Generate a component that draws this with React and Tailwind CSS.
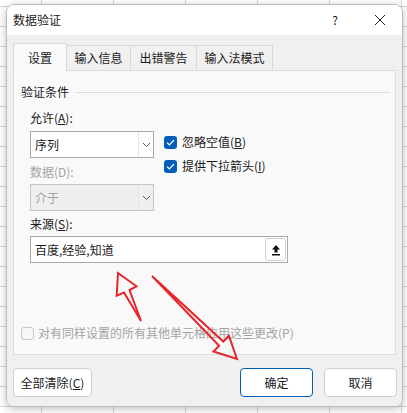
import React from "react";

const font = { fontFamily: '"Noto Sans CJK SC", "Noto Sans", sans-serif' };

function Chevron() {
  return (
    <svg width="9" height="6" viewBox="0 0 9 6">
      <path d="M1 1 L4.5 4.5 L8 1" fill="none" stroke="#5a5a5a" strokeWidth="1" />
    </svg>
  );
}

function Check() {
  return (
    <span className="flex items-center justify-center w-[13px] h-[13px] rounded-[3px] bg-[#005fb8]">
      <svg width="9" height="7" viewBox="0 0 9 7">
        <path d="M1 3.6 L3.4 5.8 L8 1" fill="none" stroke="white" strokeWidth="1.2" />
      </svg>
    </span>
  );
}

function Select({ value, disabled }) {
  return (
    <div
      className={
        "flex items-center h-[27px] w-[124px] border " +
        (disabled ? "bg-[#efefef] border-[#c4c4c4] text-[#a3a3a3]" : "bg-white border-[#a9a9a9] text-[#1a1a1a]")
      }
    >
      <span className="flex-1 pl-[4px]">{value}</span>
      <span className="flex items-center justify-center w-[15px] h-full border-l border-[#e4e4e4]">
        <Chevron />
      </span>
    </div>
  );
}

export default function App() {
  return (
    <div
      style={font}
      className="relative w-[407px] h-[413px] overflow-hidden bg-white bg-[linear-gradient(to_right,#d6d6d6_1px,transparent_1px),linear-gradient(to_bottom,#d6d6d6_1px,transparent_1px)] [background-size:72px_20px] [background-position:41px_6px] text-[12px] leading-[16px] text-[#1a1a1a]"
    >
      <div className="ml-[6px] mt-[4px] w-[397px] h-[403px] flex flex-col rounded-[8px] border border-[#bcbcbc] shadow-[0_2px_8px_rgba(0,0,0,0.25)] overflow-hidden">
        {/* title bar */}
        <div className="flex items-center h-[30px] bg-white pl-[6px]">
          <span>数据验证</span>
          <div className="ml-auto flex items-center h-full">
            <span className="w-[46px] text-center">?</span>
            <span className="flex items-center justify-center w-[44px]">
              <svg width="12" height="12" viewBox="0 0 12 12">
                <path d="M1 1 L11 11 M11 1 L1 11" stroke="#1a1a1a" strokeWidth="1" />
              </svg>
            </span>
          </div>
        </div>

        {/* body */}
        <div className="flex-1 flex flex-col bg-[#f0f0f0] px-[6px] pt-[8px]">
          {/* tabs */}
          <div className="flex items-end h-[27px]">
            <div className="relative z-10 -mb-px flex items-center justify-center w-[54px] h-[28px] bg-[#f9f9f9] border border-b-0 border-[#d9d9d9]">
              设置
            </div>
            {["输入信息", "出错警告", "输入法模式"].map((t, i) => (
              <div
                key={t}
                className={
                  "flex items-center justify-center h-[25px] border border-l-0 border-b-0 border-[#d9d9d9] " +
                  (i === 0 ? "w-[64px]" : i === 1 ? "w-[66px]" : "w-[76px]")
                }
              >
                {t}
              </div>
            ))}
          </div>

          {/* panel */}
          <div className="h-[285px] flex flex-col bg-[#f9f9f9] border border-[#dcdcdc] pl-[7px] pr-[5px]">
            <div className="flex items-center mt-[13px] h-[16px]">
              <span>验证条件</span>
              <span className="flex-1 ml-[6px] h-px bg-[#dcdcdc]" />
            </div>

            <div className="flex pl-[9px] mt-[10px]">
              <div className="flex flex-col">
                <span className="h-[16px]">
                  允许(<span className="underline">A</span>):
                </span>
                <div className="mt-[5px]">
                  <Select value="序列" />
                </div>
                <span className="h-[16px] mt-[6px] text-[#a3a3a3]">数据(D):</span>
                <div className="mt-[4px]">
                  <Select value="介于" disabled />
                </div>
              </div>
              <div className="flex flex-col ml-[10px] pt-[24px] gap-[8px]">
                <div className="flex items-center gap-[5px] h-[16px]">
                  <Check />
                  <span>
                    忽略空值(<span className="underline">B</span>)
                  </span>
                </div>
                <div className="flex items-center gap-[5px] h-[16px]">
                  <Check />
                  <span>
                    提供下拉箭头(<span className="underline">I</span>)
                  </span>
                </div>
              </div>
            </div>

            <div className="flex flex-col pl-[9px] mt-[5px]">
              <span className="h-[16px]">
                来源(<span className="underline">S</span>):
              </span>
              <div className="mt-[4px] flex items-center w-[258px] h-[27px] bg-white border border-[#a9a9a9] pl-[4px] pr-[1px]">
                <span className="flex-1">百度,经验,知道</span>
                <span className="flex items-center justify-center w-[21px] h-[23px] rounded-[3px] border border-[#cfcfcf] bg-white">
                  <svg width="10" height="12" viewBox="0 0 10 12">
                    <path d="M5 1 L9 5.5 H6.5 V8.5 H3.5 V5.5 H1 Z" fill="#111" />
                    <rect x="1" y="10" width="8" height="1.5" fill="#111" />
                  </svg>
                </span>
              </div>
            </div>

            <div className="flex items-center gap-[4px] mt-auto mb-[13px] text-[#a3a3a3]">
              <span className="w-[13px] h-[13px] rounded-[3px] border border-[#c8c8c8] bg-[#f7f7f7]" />
              <span>对有同样设置的所有其他单元格应用这些更改(P)</span>
            </div>
          </div>

          {/* buttons */}
          <div className="flex items-center mt-[13px]">
            <button className="w-[79px] h-[29px] rounded-[4px] border border-[#d0d0d0] bg-white">
              全部清除(<span className="underline">C</span>)
            </button>
            <button className="ml-auto w-[73px] h-[29px] rounded-[4px] border border-[#005fb8] bg-white">
              确定
            </button>
            <button className="ml-[11px] mr-[-1px] w-[73px] h-[29px] rounded-[4px] border border-[#d0d0d0] bg-white">
              取消
            </button>
          </div>
        </div>
      </div>

      {/* red arrows */}
      <svg className="absolute left-0 top-0 pointer-events-none" width="407" height="413" viewBox="0 0 407 413">
        <polygon
          points="118,273 136.5,286.3 129.5,290 141,321 124,292.5 116.7,295.7"
          fill="none"
          stroke="#e8242c"
          strokeWidth="2"
          strokeLinejoin="miter"
        />
        <polygon
          points="237,359 228.9,335.7 223.3,341.5 152,276 219.1,345.7 213.5,351.5"
          fill="none"
          stroke="#e8242c"
          strokeWidth="2"
          strokeLinejoin="miter"
        />
      </svg>
    </div>
  );
}
